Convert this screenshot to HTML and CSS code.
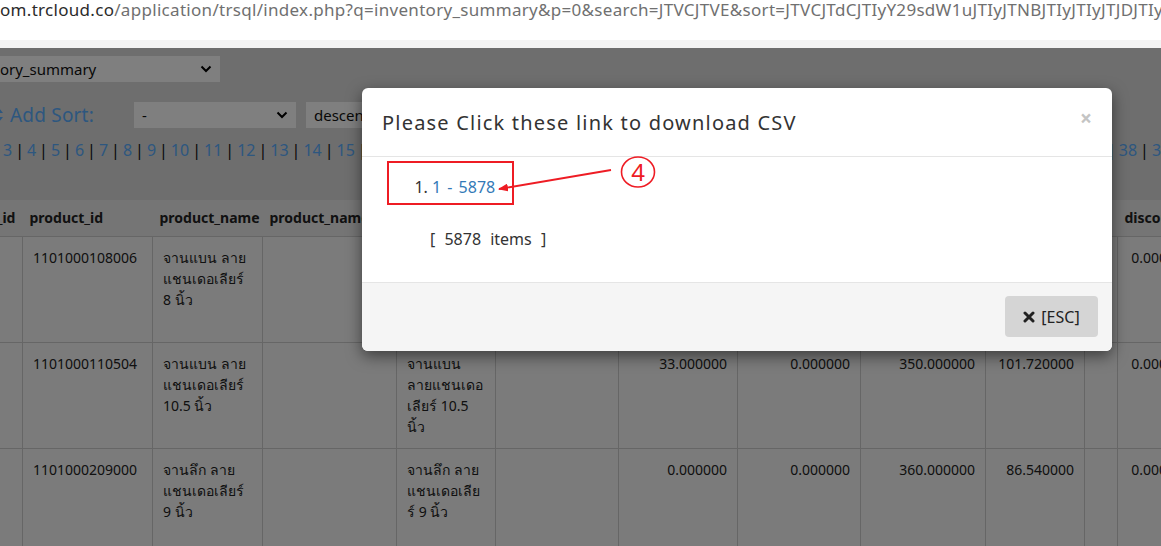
FILE: index.html
```html
<!DOCTYPE html>
<html lang="th">
<head>
<meta charset="utf-8">
<title>inventory_summary</title>
<link rel="stylesheet" href="styles.css">
</head>
<body>
<div class="chrome">
  <div class="url"><span class="host">om.trcloud.co</span><span class="path">/application/trsql/index.php?q=inventory_summary&amp;p=0&amp;search=JTVCJTVE&amp;sort=JTVCJTdCJTIyY29sdW1uJTIyJTNBJTIyJTIyJTJDJTIyb3JkZXIlMjIlM0ElMjJkZXNjJTIyJTdEJTVE</span></div>
  <div class="strip"></div>
</div>

<div class="viewport">
  <div class="page">
    <div class="row">
      <div class="select wide"><span>inventory_summary</span><svg class="chev" viewBox="0 0 12 8" width="12" height="8"><path d="M1.5 1.5 L6 6 L10.5 1.5" fill="none" stroke="#000" stroke-width="2"/></svg></div>
    </div>
    <div class="row sortrow">
      <span class="addsort"><svg class="sorticon" viewBox="0 0 10 16" width="10" height="16"><path d="M5 1 L9 6 L1 6 Z M5 15 L9 10 L1 10 Z" fill="currentColor"/></svg>Add Sort:</span>
      <div class="select mid"><span>-</span><svg class="chev" viewBox="0 0 12 8" width="12" height="8"><path d="M1.5 1.5 L6 6 L10.5 1.5" fill="none" stroke="#000" stroke-width="2"/></svg></div>
      <div class="select mid"><span>descending</span><svg class="chev" viewBox="0 0 12 8" width="12" height="8"><path d="M1.5 1.5 L6 6 L10.5 1.5" fill="none" stroke="#000" stroke-width="2"/></svg></div>
    </div>
    <div class="pager">
      <a>1</a><i>|</i><a>2</a><i>|</i><a>3</a><i>|</i><a>4</a><i>|</i><a>5</a><i>|</i><a>6</a><i>|</i><a>7</a><i>|</i><a>8</a><i>|</i><a>9</a><i>|</i><a>10</a><i>|</i><a>11</a><i>|</i><a>12</a><i>|</i><a>13</a><i>|</i><a>14</a><i>|</i><a>15</a><i>|</i><a>16</a><i>|</i><a>17</a><i>|</i><a>18</a><i>|</i><a>19</a><i>|</i><b class="cur">20</b><i>|</i><a>21</a><i>|</i><a>22</a><i>|</i><a>23</a><i>|</i><a>24</a><i>|</i><a>25</a><i>|</i><a>26</a><i>|</i><a>27</a><i>|</i><a>28</a><i>|</i><a>29</a><i>|</i><a>30</a><i>|</i><a>31</a><i>|</i><a>32</a><i>|</i><a>33</a><i>|</i><a>34</a><i>|</i><a>35</a><i>|</i><a>36</a><i>|</i><a>37</a><i>|</i><a>38</a><i>|</i><a>39</a><i>|</i><a>40</a>
    </div>
    <table class="data">
      <colgroup>
        <col style="width:74px"><col style="width:130px"><col style="width:110px"><col style="width:134px"><col style="width:99px"><col style="width:123px"><col style="width:119px"><col style="width:123px"><col style="width:125px"><col style="width:99px"><col style="width:33px"><col style="width:84px"><col style="width:100px">
      </colgroup>
      <thead>
        <tr><th>brand_id</th><th>product_id</th><th>product_name</th><th>product_name_en</th><th>name_th</th><th>unit</th><th>qty_in</th><th>qty_out</th><th>price</th><th>cost</th><th></th><th>discount</th><th>total</th></tr>
      </thead>
      <tbody>
        <tr>
          <td>1</td><td>1101000108006</td><td>จานแบน ลาย แชนเดอเลียร์ 8 นิ้ว</td><td></td><td>จานแบน ลายแชนเดอ เลียร์ 8 นิ้ว</td><td></td><td class="n">20.000000</td><td class="n">0.000000</td><td class="n">290.000000</td><td class="n">84.110000</td><td></td><td class="n">0.000000</td><td class="n">0.000000</td>
        </tr>
        <tr>
          <td>1</td><td>1101000110504</td><td>จานแบน ลาย แชนเดอเลียร์ 10.5 นิ้ว</td><td></td><td>จานแบน ลายแชนเดอ เลียร์ 10.5 นิ้ว</td><td></td><td class="n">33.000000</td><td class="n">0.000000</td><td class="n">350.000000</td><td class="n">101.720000</td><td></td><td class="n">0.000000</td><td class="n">0.000000</td>
        </tr>
        <tr>
          <td>1</td><td>1101000209000</td><td>จานลึก ลาย แชนเดอเลียร์ 9 นิ้ว</td><td></td><td>จานลึก ลาย แชนเดอเลีย ร์ 9 นิ้ว</td><td></td><td class="n">0.000000</td><td class="n">0.000000</td><td class="n">360.000000</td><td class="n">86.540000</td><td></td><td class="n">0.000000</td><td class="n">0.000000</td>
        </tr>
      </tbody>
    </table>
  </div>
  <div class="backdrop"></div>
</div>

<div class="modal">
  <div class="modal-header">
    <span class="close">×</span>
    <h4 class="modal-title">Please Click these link to download CSV</h4>
  </div>
  <div class="modal-body">
    <ol class="links">
      <li><a class="dl">1 - 5878</a></li>
    </ol>
    <div class="count">[ 5878 items ]</div>
  </div>
  <div class="modal-footer">
    <button class="btn"><svg class="x" viewBox="0 0 12 12" width="12" height="12"><path d="M2 2 L10 10 M10 2 L2 10" stroke="#222" stroke-width="3" stroke-linecap="round"/></svg>[ESC]</button>
  </div>
</div>

<svg class="annot" width="1161" height="546" viewBox="0 0 1161 546">
  <defs>
    <marker id="ah" markerWidth="10" markerHeight="8" refX="9" refY="4" orient="auto" markerUnits="userSpaceOnUse">
      <path d="M0,0 L10,4 L0,8 z" fill="#ee1c24"/>
    </marker>
  </defs>
  <rect x="388" y="162" width="125" height="42" fill="none" stroke="#ee1c24" stroke-width="2"/>
  <ellipse cx="638" cy="172" rx="16.5" ry="15" fill="none" stroke="#ee1c24" stroke-width="1.6"/>
  <text x="638" y="181" text-anchor="middle" class="num">4</text>
  <line x1="611" y1="170" x2="499" y2="189" stroke="#ee1c24" stroke-width="1.8" marker-end="url(#ah)"/>
</svg>
</body>
</html>
```
FILE: styles.css
```css
* { box-sizing: border-box; }
html, body { margin: 0; padding: 0; }
body {
  width: 1161px;
  height: 546px;
  overflow: hidden;
  position: relative;
  background: #fff;
  font-family: "Noto Sans", "Open Sans", sans-serif;
  color: #333;
}

/* browser address bar */
.chrome { height: 48px; background: #fff; }
.url {
  height: 40px;
  font-size: 17px;
  letter-spacing: 0.3px;
  line-height: 17px;
  white-space: nowrap;
  overflow: hidden;
  padding-top: 1px;
}
.url .host { color: #2b2b2b; }
.url .path { color: #707070; }
.strip { height: 8px; background: #f4f4f4; }

/* page under the modal backdrop */
.viewport {
  position: relative;
  height: 498px;
  overflow: hidden;
  background: #dcdcdc;
}
.page {
  width: 1500px;
  margin-left: -60px;
  padding-top: 8px;
}
.row { display: flex; align-items: center; padding-left: 8px; }
.select {
  height: 26px;
  background: #fff;
  display: flex;
  align-items: center;
  justify-content: space-between;
  padding: 0 8px;
  font-size: 15px;
  color: #111;
}
.select.wide { width: 272px; }
.select.mid { width: 162px; }
.chev { flex: none; }
.sortrow { margin-top: 20px; padding-left: 54px; }
.addsort {
  display: flex;
  align-items: center;
  color: #5aaeff;
  font-size: 19px;
  letter-spacing: 0.2px;
  width: 140px;
  height: 26px;
}
.sorticon { margin-right: 6px; color: #5aaeff; }
.sortrow .select + .select { margin-left: 10px; }

.pager {
  margin-top: 10px;
  padding-left: 15px;
  font-size: 16px;
  line-height: 24px;
  white-space: nowrap;
}
.pager a { color: #5aaeff; }
.pager i { font-style: normal; color: #111; margin: 0 3px; }
.pager .cur { color: #111; padding: 0 10px; }

.data {
  margin-top: 38px;
  margin-left: 8px;
  border-collapse: collapse;
  table-layout: fixed;
  width: 1353px;
  font-size: 14px;
  color: #222;
}
.data th {
  background: #eaeaea;
  text-align: left;
  font-weight: 700;
  padding: 8px 7px;
  line-height: 20px;
  white-space: nowrap;
  overflow: hidden;
  border-bottom: 1px solid #ccc;
}
.data td {
  background: #f6f6f6;
  border: 1px solid #ccc;
  vertical-align: top;
  padding: 10px 10px 10px 10px;
  line-height: 21px;
  height: 106px;
}
.data td.n { text-align: right; }

.backdrop {
  position: absolute;
  inset: 0;
  background: rgba(0, 0, 0, 0.5);
}

/* modal */
.modal {
  position: absolute;
  left: 362px;
  top: 88px;
  width: 750px;
  background: #fff;
  border-radius: 6px;
  box-shadow: 0 5px 15px rgba(0, 0, 0, 0.5);
  overflow: hidden;
}
.modal-header {
  padding: 20px 20px 19px;
  border-bottom: 1px solid #e5e5e5;
}
.modal-title {
  margin: 0;
  font-size: 20px;
  font-weight: 400;
  letter-spacing: 1.2px;
  line-height: 29px;
  color: #333;
}
.close {
  float: right;
  margin-top: -4px;
  font-size: 21px;
  font-weight: 700;
  line-height: 29px;
  color: #c4c4c4;
}
.modal-body {
  padding: 18px 20px 31px;
  font-size: 16px;
  color: #333;
}
.links { margin: 0; padding-left: 50px; line-height: 24px; }
.dl { color: #337ab7; word-spacing: 2px; }
.count {
  margin-top: 28px;
  padding-left: 48px;
  line-height: 24px;
  word-spacing: 5px;
}
.modal-footer {
  background: #f5f5f5;
  border-top: 1px solid #e5e5e5;
  padding: 13px 14px 14px;
  display: flex;
  justify-content: flex-end;
}
.btn {
  height: 41px;
  width: 93px;
  border: 0;
  border-radius: 4px;
  background: #d5d5d5;
  font-family: "Noto Sans", "Open Sans", sans-serif;
  font-size: 16px;
  color: #222;
  display: flex;
  align-items: center;
  justify-content: center;
  gap: 6px;
  padding: 0;
}

/* screenshot annotation */
.annot {
  position: absolute;
  left: 0;
  top: 0;
  pointer-events: none;
}
.annot .num {
  font-family: "Noto Sans", sans-serif;
  font-size: 24px;
  fill: #ee1c24;
}
```
